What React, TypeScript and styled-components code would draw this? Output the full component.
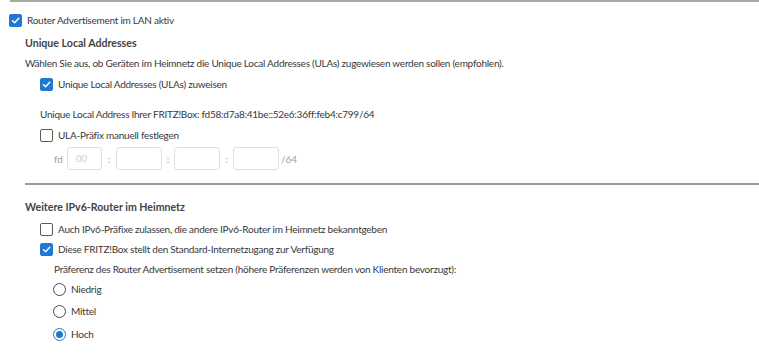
import React from "react";
import styled, { createGlobalStyle } from "styled-components";

const GlobalStyle = createGlobalStyle`
  body {
    margin: 0;
    background: #ffffff;
    font-family: "Lato", "Liberation Sans", sans-serif;
    color: #383838;
  }
`;

const Page = styled.div`
  width: 759px;
  height: 354px;
  overflow: hidden;
`;

const TopRule = styled.div`
  height: 2px;
  margin-left: 10px;
  background: #a8a8a8;
`;

const Divider = styled.div`
  height: 2px;
  margin: 13px 0 0 25px;
  background: #9a9a9a;
`;

interface RowProps {
  $indent: number;
  $top?: number;
}

const Row = styled.div<RowProps>`
  display: flex;
  align-items: center;
  gap: 5px;
  height: 20px;
  margin-top: ${(p) => p.$top ?? 0}px;
  padding-left: ${(p) => p.$indent}px;
  font-size: 10px;
  letter-spacing: -0.25px;
  white-space: nowrap;
`;

const Heading = styled(Row)`
  font-size: 10.6px;
  font-weight: 700;
  letter-spacing: 0;
  color: #444;
`;

const Box = styled.span<{ $checked?: boolean }>`
  display: inline-flex;
  align-items: center;
  justify-content: center;
  box-sizing: border-box;
  width: 13px;
  height: 13px;
  border-radius: 2px;
  border: 1px solid ${(p) => (p.$checked ? "#1f78d1" : "#5a5a5a")};
  background: ${(p) => (p.$checked ? "#1f78d1" : "#fff")};
  flex-shrink: 0;
`;

const Radio = styled.span<{ $checked?: boolean }>`
  display: inline-flex;
  align-items: center;
  justify-content: center;
  box-sizing: border-box;
  width: 13px;
  height: 13px;
  border-radius: 50%;
  border: 1px solid ${(p) => (p.$checked ? "#1f78d1" : "#4a4a4a")};
  flex-shrink: 0;
  &::after {
    content: "";
    display: ${(p) => (p.$checked ? "block" : "none")};
    width: 7px;
    height: 7px;
    border-radius: 50%;
    background: #1f78d1;
  }
`;

const InputRow = styled.div`
  display: flex;
  align-items: center;
  height: 23px;
  margin-top: 2px;
  padding-left: 54px;
  font-size: 10px;
  color: #a0a0a0;
`;

const Field = styled.span<{ $w: number }>`
  box-sizing: border-box;
  display: inline-flex;
  align-items: center;
  width: ${(p) => p.$w}px;
  height: 23px;
  border: 1px solid #e0e0e0;
  border-radius: 3px;
  padding-left: 8px;
  color: #cfcfcf;
  font-size: 9.5px;
`;

const Sep = styled.span<{ $w: number; $left?: boolean }>`
  display: inline-block;
  width: ${(p) => p.$w}px;
  text-align: ${(p) => (p.$left ? "left" : "center")};
`;

const Check = ({ checked }: { checked?: boolean }) => (
  <Box $checked={checked}>
    {checked && (
      <svg width="9" height="9" viewBox="0 0 10 10">
        <path d="M1.6 5.2 L4 7.5 L8.6 2.4" fill="none" stroke="#fff" strokeWidth="1.6" strokeLinecap="round" strokeLinejoin="round" />
      </svg>
    )}
  </Box>
);

function App() {
  return (
    <Page>
      <GlobalStyle />
      <TopRule />
      <Row $indent={9} $top={8}>
        <Check checked />
        Router Advertisement im LAN aktiv
      </Row>
      <Heading $indent={25} $top={3}>Unique Local Addresses</Heading>
      <Row $indent={25}>
        Wählen Sie aus, ob Geräten im Heimnetz die Unique Local Addresses (ULAs) zugewiesen werden sollen (empfohlen).
      </Row>
      <Row $indent={40} $top={1}>
        <Check checked />
        Unique Local Addresses (ULAs) zuweisen
      </Row>
      <Row $indent={40} $top={10}>
        Unique Local Address Ihrer FRITZ!Box: fd58:d7a8:41be::52e6:36ff:feb4:c799/64
      </Row>
      <Row $indent={40} $top={1}>
        <Check />
        ULA-Präfix manuell festlegen
      </Row>
      <InputRow>
        <Sep $w={13} $left>fd</Sep>
        <Field $w={35}>00</Field>
        <Sep $w={14}>:</Sep>
        <Field $w={46} />
        <Sep $w={12}>:</Sep>
        <Field $w={46} />
        <Sep $w={13}>:</Sep>
        <Field $w={46} />
        <Sep $w={20}>/64</Sep>
      </InputRow>
      <Divider />
      <Heading $indent={25} $top={12}>Weitere IPv6-Router im Heimnetz</Heading>
      <Row $indent={40} $top={2}>
        <Check />
        Auch IPv6-Präfixe zulassen, die andere IPv6-Router im Heimnetz bekanntgeben
      </Row>
      <Row $indent={40}>
        <Check checked />
        Diese FRITZ!Box stellt den Standard-Internetzugang zur Verfügung
      </Row>
      <Row $indent={54}>
        Präferenz des Router Advertisement setzen (höhere Präferenzen werden von Klienten bevorzugt):
      </Row>
      <Row $indent={53} $top={0}>
        <Radio />
        Niedrig
      </Row>
      <Row $indent={53} $top={2}>
        <Radio />
        Mittel
      </Row>
      <Row $indent={53} $top={3}>
        <Radio $checked />
        Hoch
      </Row>
    </Page>
  );
}

export default App;
